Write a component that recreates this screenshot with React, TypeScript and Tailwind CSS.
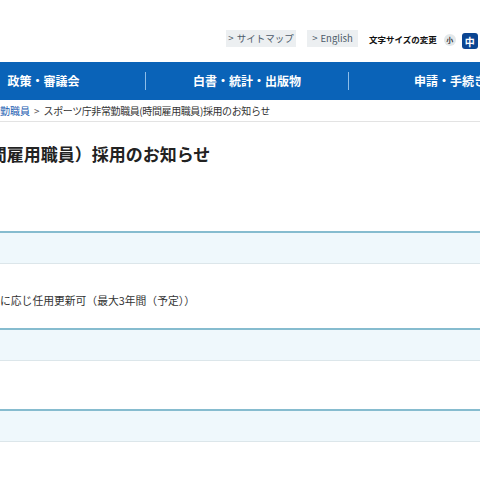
export default function App() {
  const font = "font-['Noto_Sans_CJK_JP','Noto_Sans',sans-serif]";
  return (
    <div className={`w-[480px] h-[480px] overflow-hidden bg-white text-[#333] ${font}`}>
      {/* utility bar */}
      <div className="h-[62px] flex items-start pt-[30px] pl-[226px] whitespace-nowrap">
        <a className="w-[70px] h-[17px] flex items-center justify-center gap-[3px] bg-[#eceff1] text-[9.5px] text-[#4d5b6a]">
          <span>&gt;</span>サイトマップ
        </a>
        <a className="ml-[11px] w-[51px] h-[17px] flex items-center justify-center gap-[3px] bg-[#eceff1] text-[9.5px] text-[#4d5b6a]">
          <span>&gt;</span>English
        </a>
        <span className="ml-[11px] h-[19px] flex items-center text-[8.5px] font-bold text-[#111]">
          文字サイズの変更
        </span>
        <span className="ml-[7px] mt-[4px] w-[12px] h-[12px] rounded-full bg-[#e3e8ea] flex items-center justify-center text-[7px] font-bold text-[#333]">
          小
        </span>
        <span className="ml-[6px] mt-[3px] w-[16px] h-[16px] rounded-[3px] bg-[#0b4592] flex items-center justify-center text-[10px] font-bold text-white">
          中
        </span>
      </div>

      {/* global nav */}
      <nav className="h-[38px] bg-[#0a63b8] flex items-center -ml-[58px] whitespace-nowrap">
        <div className="w-[203px] shrink-0 text-center text-[12px] font-bold text-white">政策・審議会</div>
        <div className="w-px h-[18px] bg-[#8dbde8] shrink-0" />
        <div className="w-[202px] shrink-0 text-center text-[12px] font-bold text-white">白書・統計・出版物</div>
        <div className="w-px h-[18px] bg-[#8dbde8] shrink-0" />
        <div className="w-[202px] shrink-0 text-center text-[12px] font-bold text-white">申請・手続き</div>
      </nav>

      {/* breadcrumb */}
      <div className="h-[22px] flex items-center border-b border-[#e3e3e3] text-[10px] whitespace-nowrap -ml-[20px]">
        <a className="text-[#1a5cb0]">非常勤職員</a>
        <span className="mx-[4px] text-[#555]">&gt;</span>
        <span className="text-[#333] tracking-[-0.4px]">スポーツ庁非常勤職員(時間雇用職員)採用のお知らせ</span>
      </div>

      {/* heading */}
      <div className="h-[109px] overflow-hidden">
        <h1 className="pt-[22px] -ml-[214px] text-[17px] leading-[20px] font-bold text-[#222] whitespace-nowrap">
          スポーツ庁非常勤職員（時間雇用職員）採用のお知らせ
        </h1>
      </div>

      {/* table rows */}
      <div className="border-t-2 border-[#86bccf]">
        <div className="h-[31px] bg-[#eff8fc] border-b border-[#dce6ea]" />
      </div>
      <div className="h-[64px] flex items-center text-[10.8px] text-[#333] whitespace-nowrap">
        <span className="pt-[8px]">に応じ任用更新可（最大3年間（予定））</span>
      </div>
      <div className="border-t-2 border-[#86bccf]">
        <div className="h-[31px] bg-[#eff8fc] border-b border-[#dce6ea]" />
      </div>
      <div className="h-[48px]" />
      <div className="border-t-2 border-[#86bccf]">
        <div className="h-[31px] bg-[#eff8fc] border-b border-[#dce6ea]" />
      </div>
    </div>
  );
}
